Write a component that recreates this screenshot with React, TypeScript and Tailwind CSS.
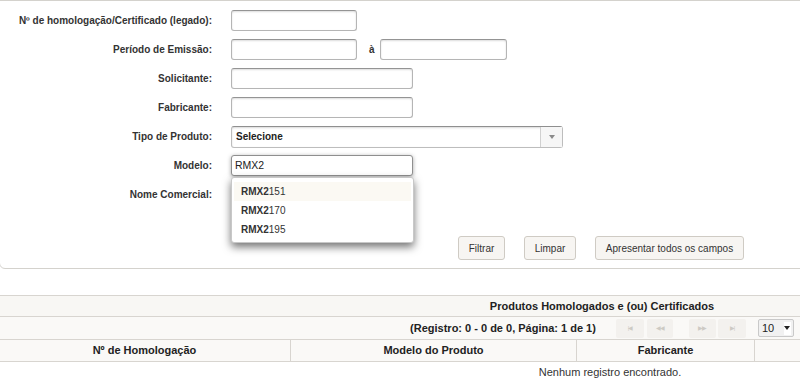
import React from "react";

const font = "font-['Liberation_Sans',Arial,sans-serif]";

const Label = ({ children }: { children: React.ReactNode }) => (
	<div className="w-[212px] shrink-0 whitespace-nowrap text-right text-[10px] font-bold text-[#333]">{children}</div>
);

const TextInput = ({ width, value, focused }: { width: string; value?: string; focused?: boolean }) => (
	<div
		className={`${width} h-[21px] shrink-0 rounded-[3px] border bg-white px-[3px] text-[10.5px] leading-[19px] text-[#222] ${
			focused
				? "border-[#8f8f8f] shadow-[0_1px_4px_rgba(0,0,0,0.35)]"
				: "border-[#b5b5b5] border-t-[#949494] shadow-[inset_0_1px_2px_rgba(0,0,0,0.14)]"
		}`}
	>
		{value}
	</div>
);

const Row = ({ label, children }: { label: string; children: React.ReactNode }) => (
	<div className="flex items-center gap-[19px] h-[21px]">
		<Label>{label}</Label>
		{children}
	</div>
);

const Btn = ({ children, w }: { children: React.ReactNode; w: string }) => (
	<div className={`${w} h-[24px] flex items-center justify-center rounded-[3px] border border-[#cfcbc4] bg-[#f7f5f2] text-[10px] text-[#333]`}>
		{children}
	</div>
);

const PagerBtn = ({ glyph, w }: { glyph: string; w: string }) => (
	<div className={`${w} h-[19px] flex items-center justify-center rounded-[2px] bg-[#f3f1ee] text-[6px] text-[#cdcac4] tracking-[-1px]`}>
		{glyph}
	</div>
);

const suggestions = ["151", "170", "195"];

export default function App() {
	return (
		<div className={`${font} w-[800px] h-[382px] overflow-hidden bg-white`}>
			{/* filter panel */}
			<div className="relative -ml-[1px] w-[1210px] border border-[#d4d2cd] rounded-b-[6px] bg-white pt-[9px] pb-[8px]">
				<div className="flex flex-col gap-[8px]">
					<Row label="Nº de homologação/Certificado (legado):">
						<TextInput width="w-[126px]" />
					</Row>
					<Row label="Período de Emissão:">
						<TextInput width="w-[126px]" />
						<span className="-ml-[7px] text-[10px] font-bold text-[#333]">à</span>
						<div className="-ml-[14px]">
							<TextInput width="w-[127px]" />
						</div>
					</Row>
					<Row label="Solicitante:">
						<TextInput width="w-[182px]" />
					</Row>
					<Row label="Fabricante:">
						<TextInput width="w-[182px]" />
					</Row>
					<Row label="Tipo de Produto:">
						<div className="w-[332px] h-[22px] flex rounded-[3px] border border-[#bdbdbd] border-t-[#8f8f8f] bg-white shadow-[inset_0_1px_2px_rgba(0,0,0,0.15)]">
							<div className="flex-1 px-[4px] text-[10px] font-bold leading-[19px] text-[#222]">Selecione</div>
							<div className="w-[22px] flex items-center justify-center border-l border-[#d0d0d0] bg-[#f6f6f6]">
								<div className="w-0 h-0 border-l-[3px] border-r-[3px] border-t-[4px] border-l-transparent border-r-transparent border-t-[#8a8a8a]" />
							</div>
						</div>
					</Row>
					<div className="relative">
						<Row label="Modelo:">
							<TextInput width="w-[182px]" value="RMX2" focused />
						</Row>
						{/* autocomplete menu */}
						<div className="absolute left-[231px] top-[22px] z-10 w-[183px] h-[66px] rounded-[3px] border border-[#c8c8c8] bg-white pt-[4px] px-[2px] shadow-[0_4px_8px_rgba(0,0,0,0.55)]">
							{suggestions.map((s, i) => (
								<div
									key={s}
									className={`h-[19px] px-[7px] text-[10px] leading-[19px] text-[#333] ${i === 0 ? "bg-[#fbf9f3]" : ""}`}
								>
									<b>RMX2</b>
									{s}
								</div>
							))}
						</div>
					</div>
					<Row label="Nome Comercial:">
						<TextInput width="w-[182px]" />
					</Row>
				</div>
				<div className="flex mt-[31px] pl-[458px] gap-[19px]">
					<Btn w="w-[47px]">Filtrar</Btn>
					<Btn w="w-[52px]">Limpar</Btn>
					<Btn w="w-[149px]">Apresentar todos os campos</Btn>
				</div>
			</div>

			{/* results table */}
			<div className="mt-[26px] -ml-[1px] w-[1206px] border-t border-[#d8d5d0] text-[#222]">
				<div className="h-[21px] flex items-center justify-center border-b border-[#d8d5d0] bg-[#f8f7f4] text-[11px] font-bold">
					Produtos Homologados e (ou) Certificados
				</div>
				<div className="h-[23px] flex items-center justify-center border-b border-[#d8d5d0] bg-[#faf9f7] text-[11px]">
					<span className="font-bold">(Registro: 0 - 0 de 0, Página: 1 de 1)</span>
					<div className="ml-[20px] flex gap-[3px]">
						<PagerBtn glyph="|◀" w="w-[28px]" />
						<PagerBtn glyph="◀◀" w="w-[26px]" />
					</div>
					<div className="ml-[16px] flex gap-[2px]">
						<PagerBtn glyph="▶▶" w="w-[27px]" />
						<PagerBtn glyph="▶|" w="w-[28px]" />
					</div>
					<div className="ml-[12px] w-[36px] h-[18px] flex items-center justify-between rounded-[2px] border border-[#c9c9c9] bg-[#f1f1f1] pl-[3px] text-[11px]">
						<span>10</span>
						<div className="w-[7px] h-[13px] mr-[2px] flex flex-col items-center justify-center bg-white">
							<div className="w-0 h-0 border-l-[3px] border-r-[3px] border-t-[4px] border-l-transparent border-r-transparent border-t-[#222]" />
						</div>
					</div>
				</div>
				<div className="h-[22px] flex border-b border-[#d8d5d0] bg-[#faf9f7] text-[11px] font-bold">
					<div className="w-[292px] flex items-center justify-center border-r border-[#d8d5d0]">Nº de Homologação</div>
					<div className="w-[286px] flex items-center justify-center border-r border-[#d8d5d0]">Modelo do Produto</div>
					<div className="w-[178px] flex items-center justify-center border-r border-[#d8d5d0]">Fabricante</div>
					<div className="flex-1" />
				</div>
				<div className="h-[20px] flex items-center justify-center text-[11px] text-[#333] pl-[16px]">
					Nenhum registro encontrado.
				</div>
			</div>
		</div>
	);
}
